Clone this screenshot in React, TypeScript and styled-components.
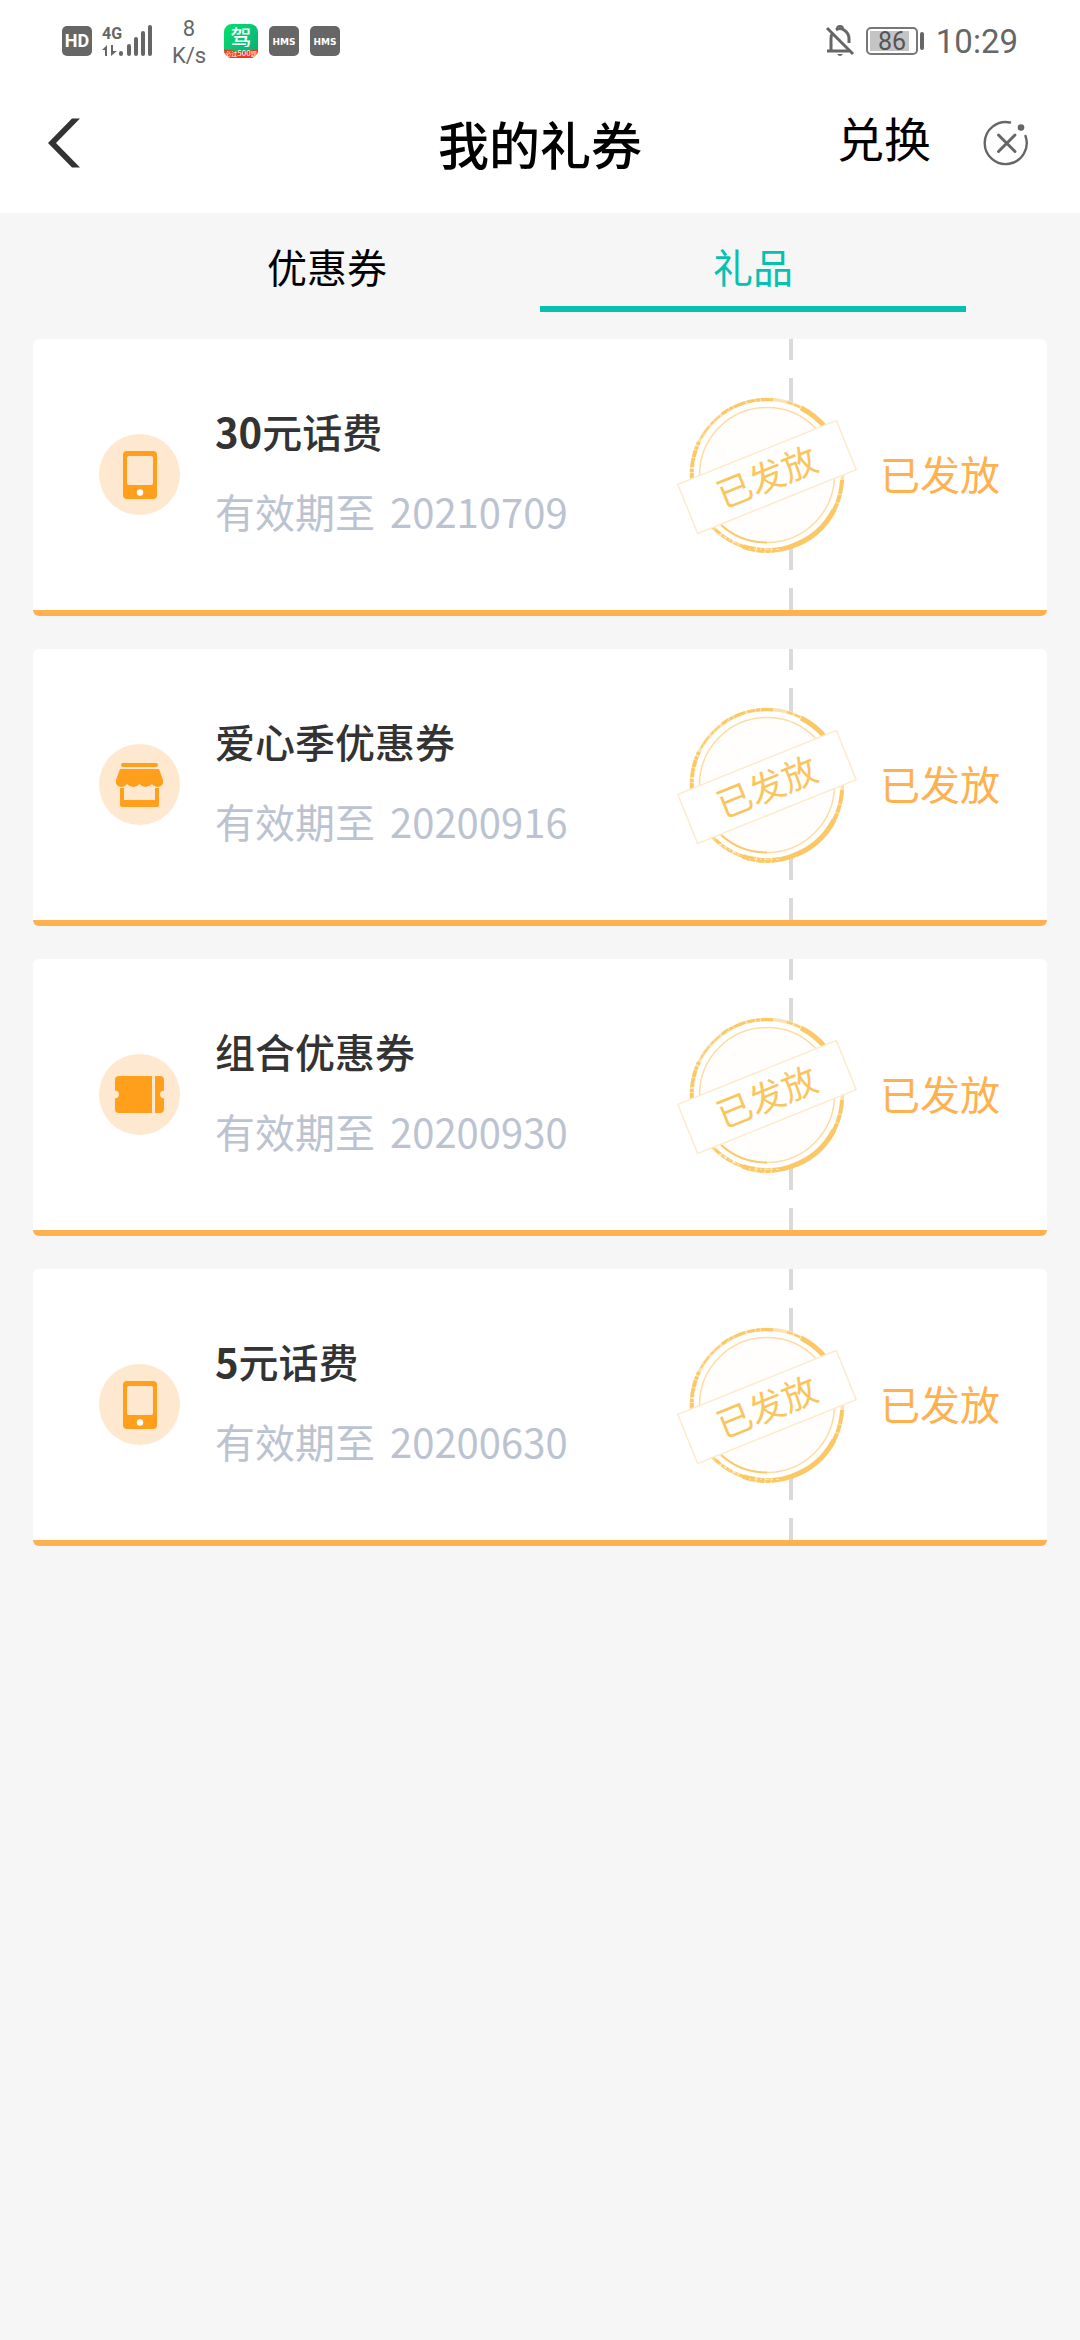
import React from "react";
import styled, { createGlobalStyle } from "styled-components";

const cjk = `"Noto Sans CJK SC", "Noto Sans", sans-serif`;
const roboto = `Roboto, "Noto Sans", sans-serif`;

const GlobalStyle = createGlobalStyle`
  *, *::before, *::after { box-sizing: border-box; }
  body { margin: 0; background: #f6f6f6; font-family: ${cjk}; color: #000; }
  button { margin: 0; padding: 0; border: 0; background: none; font: inherit; color: inherit; cursor: pointer; }
  h1, h2, p, ul { margin: 0; padding: 0; }
  svg { display: block; flex: none; overflow: visible; }
`;

const Page = styled.div`
  min-height: 100vh;
  background: #f6f6f6;
`;

const Top = styled.header`
  background: #fff;
`;

const StatusBar = styled.div`
  display: flex;
  align-items: center;
  justify-content: space-between;
  height: 80px;
  padding: 1px 62px 0;
  color: #666;
  font-family: ${roboto};
`;

const StatusGroup = styled.div<{ $gap: number }>`
  display: flex;
  align-items: center;
  gap: ${(p) => p.$gap}px;
`;

const Speed = styled.div`
  display: flex;
  flex-direction: column;
  align-items: center;
  width: 50px;
  padding-top: 2px;
  font-size: 22px;
  line-height: 27px;
`;

const Clock = styled.time`
  padding-top: 2px;
  font-size: 33px;
  line-height: 40px;
`;

const NavBar = styled.div`
  display: grid;
  grid-template-columns: 1fr auto 1fr;
  align-items: center;
  height: 133px;
  padding: 0 52px 7px 48px;
`;

const IconButton = styled.button`
  display: flex;
  justify-self: start;
`;

const Title = styled.h1`
  padding-left: 4px;
  font-size: 51px;
  line-height: 76px;
  font-weight: 500;
`;

const NavActions = styled.div`
  display: flex;
  align-items: center;
  justify-self: end;
  gap: 53px;
`;

const Exchange = styled.button`
  padding-bottom: 12px;
  font-size: 47px;
  line-height: 64px;
`;

const Tabs = styled.nav`
  display: flex;
  padding: 0 114px;
`;

const Tab = styled.button<{ $active?: boolean }>`
  flex: 1;
  height: 99px;
  padding-top: 12px;
  border-bottom: 6px solid ${(p) => (p.$active ? "#06c1ae" : "transparent")};
  color: ${(p) => (p.$active ? "#06c1ae" : "#000")};
  font-size: 40px;
  line-height: 60px;
`;

const List = styled.ul`
  display: flex;
  flex-direction: column;
  gap: 33px;
  padding: 27px 33px;
  list-style: none;
`;

const Card = styled.li`
  display: flex;
  align-items: center;
  min-height: 277px;
  padding: 0 47px 0 66px;
  background: #fff;
  border-bottom: 6px solid #ffb04f;
  border-radius: 6px;
`;

const Details = styled.div`
  flex: 1;
  display: flex;
  flex-direction: column;
  gap: 20px;
  margin-left: 35px;
  padding-bottom: 7px;
  font-size: 40px;
  line-height: 60px;
`;

const Name = styled.h2`
  color: #333;
  font-size: inherit;
  font-weight: 500;
`;

const Amount = styled.span`
  font-weight: 700;
`;

const Expiry = styled.p`
  display: flex;
  gap: 15px;
  color: #bcc3d0;
`;

const Divider = styled.div`
  position: relative;
  align-self: stretch;
  width: 4px;
  margin-right: 87px;
  background: repeating-linear-gradient(#dadada 0 24px, transparent 24px 42px) 0 -3px / 100% 294px;
`;

const StampHolder = styled.div`
  position: absolute;
  top: 50%;
  right: -64px;
  transform: translateY(-50%);
`;

const State = styled.span`
  padding-bottom: 4px;
  color: #ffb04f;
  font-size: 40px;
  line-height: 60px;
`;

const HdIcon = () => (
  <svg width="30" height="30" viewBox="0 0 30 30">
    <rect width="30" height="30" rx="5" fill="#666" />
    <text x="15" y="21" textAnchor="middle" fontFamily="Roboto" fontWeight="700" fontSize="18" fill="#fff">HD</text>
  </svg>
);

const SignalIcon = () => (
  <svg width="52" height="32" viewBox="0 0 52 32" fill="#666">
    <text x="0" y="14" fontFamily="Roboto" fontWeight="700" fontSize="16">4G</text>
    <path d="M5 20v11H3v-6H0zM9 20h2v6h4l-6 5z" />
    <rect x="17" y="26" width="4" height="5" rx="2" />
    <rect x="25" y="19" width="4" height="12" rx="2" />
    <rect x="32" y="12" width="4" height="19" rx="2" />
    <rect x="39" y="6" width="4" height="25" rx="2" />
    <rect x="46" y="0" width="4" height="31" rx="2" />
  </svg>
);

const DrivingIcon = () => (
  <svg width="34" height="34" viewBox="0 0 34 34">
    <defs>
      <linearGradient id="drive" x1="0" y1="0" x2="1" y2="1">
        <stop offset="0" stopColor="#04e06e" />
        <stop offset="1" stopColor="#0fa878" />
      </linearGradient>
      <clipPath id="driveClip"><rect width="34" height="34" rx="8" /></clipPath>
    </defs>
    <g clipPath="url(#driveClip)">
      <rect width="34" height="34" fill="url(#drive)" />
      <path d="M0 25Q17 29 34 25V34H0z" fill="#f03a1c" />
    </g>
    <text x="17" y="21" textAnchor="middle" fontFamily="Noto Sans CJK SC" fontWeight="500" fontSize="21" fill="#fff">驾</text>
    <text x="17" y="32" textAnchor="middle" fontFamily="Noto Sans CJK SC" fontSize="6" fill="#fff">必过<tspan fontSize="8">500</tspan>题</text>
  </svg>
);

const HmsIcon = () => (
  <svg width="30" height="30" viewBox="0 0 30 30">
    <rect width="30" height="30" rx="5" fill="#666" />
    <text x="15" y="19" textAnchor="middle" fontFamily="DejaVu Sans" fontWeight="700" fontSize="9" fill="#fff">HMS</text>
  </svg>
);

const MutedBellIcon = () => (
  <svg width="28" height="32" viewBox="0 0 28 32" fill="none" stroke="#666" strokeWidth="3">
    <path d="M1 26H23M5 26V13Q5 10 7 8M10 5Q14 2 18 5Q23 8 23 14V18" />
    <path d="M11 4Q11 1 14 1Q17 1 17 4" strokeWidth="2" />
    <path d="M1 3L27 29" />
    <path d="M11 29H17Q14 33 11 29z" fill="#666" stroke="none" />
  </svg>
);

const BatteryIcon = () => (
  <svg width="58" height="28" viewBox="0 0 58 28">
    <rect x="1" y="1" width="50" height="26" rx="4" fill="none" stroke="#777" strokeWidth="2" />
    <rect x="4" y="4" width="39" height="20" fill="#c4c4c4" />
    <rect x="54" y="5" width="4" height="18" rx="2" fill="#666" />
    <text x="26" y="23" textAnchor="middle" fontFamily="Roboto" fontSize="25" fill="#555">86</text>
  </svg>
);

const BackIcon = () => (
  <svg width="32" height="50" viewBox="0 0 32 50" fill="#333">
    <path d="M24 0.5H32L8 25L32 49.5H24L0 25z" />
  </svg>
);

const CloseIcon = () => (
  <svg width="44" height="46" viewBox="0 0 44 46" fill="none" stroke="#666" strokeWidth="2.4" strokeLinecap="round">
    <path d="M26 2.5A21 21 0 1 0 41.500 16" />
    <path d="M14.500 15L31 31.500M31 15L14.500 31.500" strokeWidth="3" />
    <circle cx="37" cy="7.500" r="3.300" fill="#666" stroke="none" />
  </svg>
);

type Kind = "phone" | "shop" | "ticket";

const KindIcon = ({ kind }: { kind: Kind }) => (
  <svg width="81" height="81" viewBox="0 0 81 81" fill="#ff9f1c">
    <circle cx="40.5" cy="40.5" r="40.5" fill="#ffe8d0" />
    {kind === "phone" && (
      <>
        <rect x="24" y="17" width="34" height="48" rx="4" />
        <rect x="28" y="22" width="26" height="29" rx="2" fill="#ffe8d0" />
        <circle cx="41" cy="58.500" r="3.200" fill="#fff" />
      </>
    )}
    {kind === "shop" && (
      <>
        <rect x="22" y="19" width="37" height="4" rx="2" />
        <path d="M21 25H60L64 36Q65 42 59 43Q55 43 53 40Q50 43 46.500 43Q43 43 40.500 40Q38 43 34.500 43Q31 43 28 40Q26 43 22 43Q16 42 17 36z" />
        <path d="M21 44H25V56H56V44H60V61Q60 63 58 63H23Q21 63 21 61z" />
      </>
    )}
    {kind === "ticket" && (
      <>
        <path d="M20 22H53V59H20Q16 59 16 55V44.500Q20 44 20 40.500Q20 37 16 36.500V26Q16 22 20 22z" />
        <path d="M56 22H61Q65 22 65 26V36.500Q61 37 61 40.500Q61 44 65 44.500V55Q65 59 61 59H56z" />
      </>
    )}
  </svg>
);

const Stamp = () => (
  <svg width="180" height="160" viewBox="-90 -80 180 160" fill="none">
    <circle r="77" fill="#fff" />
    <circle r="67.500" fill="#fffefc" stroke="#fddca3" strokeWidth="1.500" />
    <path d="M-46 50A68 68 0 0 0 0 67.500" stroke="#fbc96a" strokeWidth="1.800" />
    <circle r="75.500" stroke="#fde2b0" strokeWidth="3.500" />
    <g stroke="#fcc865">
      <path d="M-75 5A75.500 75.500 0 0 1 -68 -33" strokeWidth="4" strokeDasharray="7 1 3 2 9 1" />
      <path d="M-66 -37A75.500 75.500 0 0 1 -47 -59" strokeWidth="1.500" strokeDasharray="4 1 9 3" />
      <path d="M-45 -61A75.500 75.500 0 0 1 8 -75" strokeWidth="3" strokeDasharray="8 1 4 1 12 2" />
      <path d="M20 -73A75.500 75.500 0 0 1 38 -65" strokeWidth="2" strokeDasharray="6 2" />
      <path d="M34 -67A75.500 75.500 0 0 1 58 -48" strokeWidth="5" />
      <path d="M75 5A75.500 75.500 0 0 1 66 37" strokeWidth="4" strokeDasharray="14 1 8 1" />
      <path d="M67 35A75.500 75.500 0 0 1 24 71.500" strokeWidth="5" />
      <path d="M26 71A75.500 75.500 0 0 1 -24 71.500" strokeWidth="5" strokeDasharray="22 1 5 1 8 1" />
      <path d="M-22 72A75.500 75.500 0 0 1 -56 50" strokeWidth="3" strokeDasharray="7 1 4 2" />
    </g>
    <g stroke="#fff" strokeWidth="1" opacity="0.7">
      <path d="M-74 -6L-70 -22M-40 -63L-18 -72M-48 59L-26 71M-18 74L12 74.500" strokeDasharray="2 3 4 2" />
    </g>
    <g transform="translate(0 2) rotate(-22)">
      <rect x="-85.500" y="-26.500" width="171" height="53" fill="#fff" stroke="#fdebcd" strokeWidth="1.500" />
      <text y="13" textAnchor="middle" fontFamily="Noto Sans CJK SC" fontSize="35" fill="#fbc55e">已发放</text>
    </g>
  </svg>
);

const gifts: { kind: Kind; amount?: string; name: string; until: string }[] = [
  { kind: "phone", amount: "30", name: "元话费", until: "20210709" },
  { kind: "shop", name: "爱心季优惠券", until: "20200916" },
  { kind: "ticket", name: "组合优惠券", until: "20200930" },
  { kind: "phone", amount: "5", name: "元话费", until: "20200630" },
];

export default function App() {
  return (
    <Page>
      <GlobalStyle />
      <Top>
        <StatusBar>
          <StatusGroup $gap={10}>
            <HdIcon />
            <SignalIcon />
            <Speed>
              <span>8</span>
              <span>K/s</span>
            </Speed>
            <StatusGroup $gap={11}>
              <DrivingIcon />
              <HmsIcon />
              <HmsIcon />
            </StatusGroup>
          </StatusGroup>
          <StatusGroup $gap={12}>
            <MutedBellIcon />
            <BatteryIcon />
            <Clock>10:29</Clock>
          </StatusGroup>
        </StatusBar>
        <NavBar>
          <IconButton aria-label="返回"><BackIcon /></IconButton>
          <Title>我的礼券</Title>
          <NavActions>
            <Exchange>兑换</Exchange>
            <IconButton aria-label="关闭"><CloseIcon /></IconButton>
          </NavActions>
        </NavBar>
      </Top>
      <Tabs>
        <Tab>优惠券</Tab>
        <Tab $active aria-current="page">礼品</Tab>
      </Tabs>
      <List>
        {gifts.map((g) => (
          <Card key={g.until}>
            <KindIcon kind={g.kind} />
            <Details>
              <Name>
                {g.amount && <Amount>{g.amount}</Amount>}
                {g.name}
              </Name>
              <Expiry>
                <span>有效期至</span>
                <span>{g.until}</span>
              </Expiry>
            </Details>
            <Divider>
              <StampHolder><Stamp /></StampHolder>
            </Divider>
            <State>已发放</State>
          </Card>
        ))}
      </List>
    </Page>
  );
}
